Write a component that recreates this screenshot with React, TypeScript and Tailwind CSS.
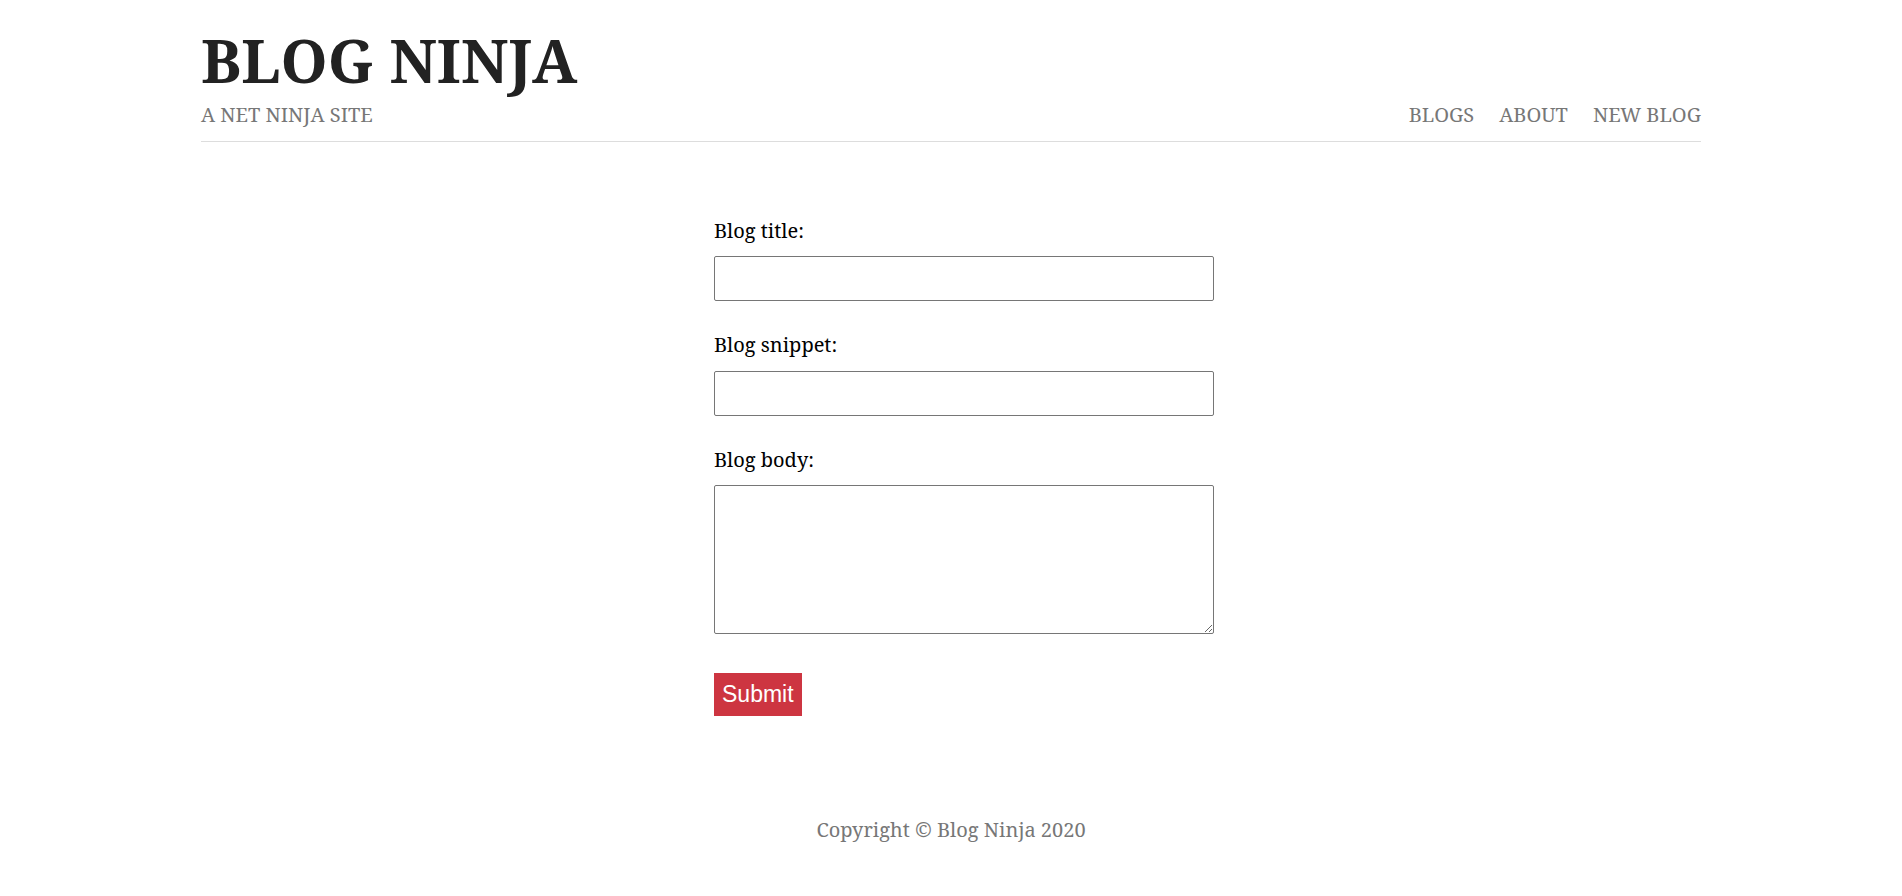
export default function App() {
  return (
    <div className="min-h-screen bg-white font-['Noto_Serif','DejaVu_Serif',serif] text-[#222]">
      <div className="w-[1500px] mx-auto pt-[20px]">
        <nav className="flex justify-between items-end border-b border-[#ddd] pb-[11px] uppercase">
          <div>
            <h1 className="text-[60px] font-bold leading-[80px] text-[#222]">BLOG NINJA</h1>
            <p className="text-[20px] text-[#777]">A NET NINJA SITE</p>
          </div>
          <ul className="flex gap-[25px] text-[20px] text-[#777]">
            <li><a href="#">Blogs</a></li>
            <li><a href="#">About</a></li>
            <li><a href="#">New Blog</a></li>
          </ul>
        </nav>
        <form className="w-[500px] mt-[74px] ml-[513px] text-black">
          <label className="block text-[20px]">Blog title:</label>
          <input type="text" className="block w-[500px] h-[45px] mt-[10px] border border-[#767676] rounded-[2px] px-[10px]" />
          <label className="block text-[20px] mt-[29px]">Blog snippet:</label>
          <input type="text" className="block w-[500px] h-[45px] mt-[11px] border border-[#767676] rounded-[2px] px-[10px]" />
          <label className="block text-[20px] mt-[29px]">Blog body:</label>
          <textarea className="block w-[500px] h-[149px] mt-[10px] border border-[#767676] rounded-[2px] px-[10px]" />
          <button type="button" className="block mt-[39px] h-[43px] bg-[#cd3541] text-white font-['Liberation_Sans',Arial,sans-serif] text-[23px] px-[8px]">Submit</button>
        </form>
        <footer className="text-center text-[#777] text-[20px] mt-[99px]">Copyright © Blog Ninja 2020</footer>
      </div>
    </div>
  );
}
